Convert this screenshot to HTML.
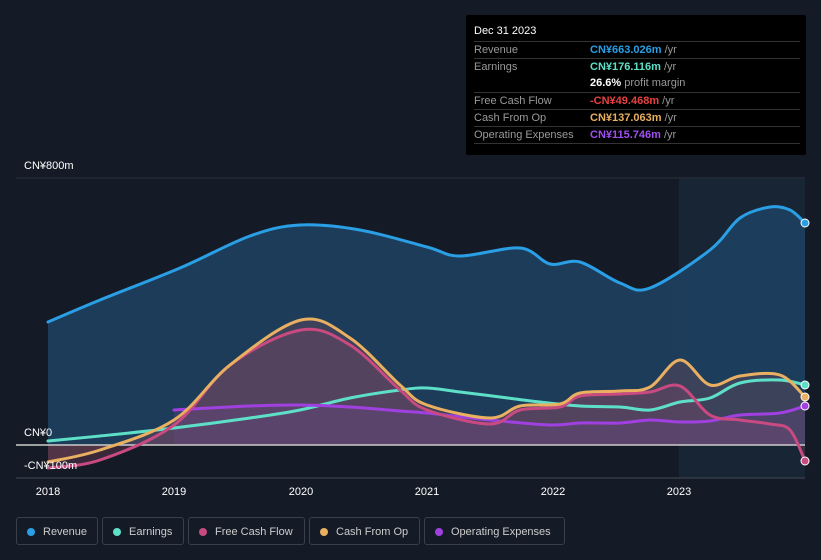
<!DOCTYPE html>
<html><head><meta charset="utf-8"><style>
body{margin:0;width:821px;height:560px;background:#151b26;font-family:"Liberation Sans",sans-serif;overflow:hidden;position:relative}
.tt{position:absolute;left:466px;top:15px;width:340px;height:140px;background:#000;border-radius:2px}
.tt .h{position:absolute;left:8px;top:10px;color:#fff;font-size:11px}
.row{position:absolute;left:8px;width:326px;border-top:1px solid #333;font-size:11px;height:17px;line-height:17px;color:#999}
.row span{position:absolute;left:116px}
.leg{position:absolute;top:517px;height:28px;border:1px solid #3a404a;border-radius:3px;color:#ccc;font-size:11px;line-height:28px;box-sizing:border-box}
.leg i{display:inline-block;width:8px;height:8px;border-radius:50%;margin:0 8px 0 10px;vertical-align:-1px}
.lbl{position:absolute;color:#fff;font-size:11px}
</style></head><body>
<div class="tt">
<div class="h">Dec 31 2023</div>
<div class="row" style="top:26px">Revenue<span style="color:#2a9fe5;font-weight:bold">CN¥663.026m <b style="color:#999;font-weight:normal">/yr</b></span></div>
<div class="row" style="top:43px">Earnings<span style="color:#5ee0c8;font-weight:bold">CN¥176.116m <b style="color:#999;font-weight:normal">/yr</b></span></div>
<div class="row" style="top:60px;border-top:none"><span style="color:#fff;font-weight:bold">26.6% <b style="color:#999;font-weight:normal">profit margin</b></span></div>
<div class="row" style="top:77px">Free Cash Flow<span style="color:#e84040;font-weight:bold">-CN¥49.468m <b style="color:#999;font-weight:normal">/yr</b></span></div>
<div class="row" style="top:94px">Cash From Op<span style="color:#e8b060;font-weight:bold">CN¥137.063m <b style="color:#999;font-weight:normal">/yr</b></span></div>
<div class="row" style="top:111px">Operating Expenses<span style="color:#a050f0;font-weight:bold">CN¥115.746m <b style="color:#999;font-weight:normal">/yr</b></span></div>
<div class="row" style="top:128px;height:1px"></div>
</div>
<div class="lbl" style="left:24px;top:160px">CN¥800m</div>
<svg id="s" width="821" height="560" style="position:absolute;left:0;top:0">
<rect x="679" y="178" width="126" height="300" fill="#1a2a3a" opacity=".7"/>
<line x1="16" y1="178" x2="805" y2="178" stroke="#2a313c"/>
<g id="g"></g>
<line x1="16" y1="445" x2="805" y2="445" stroke="#ccc" stroke-width="1.5"/>
<line x1="16" y1="478" x2="805" y2="478" stroke="#444b55"/>
<g id="l" fill="none" stroke-width="3" stroke-linejoin="round" stroke-linecap="round"></g>
<g stroke="#fff" stroke-width="1"><circle cx="805" cy="223" r="4" fill="#2a9fe5"/><circle cx="805" cy="385" r="4" fill="#5ee0c8"/><circle cx="805" cy="397" r="4" fill="#e8b060"/><circle cx="805" cy="406" r="4" fill="#a040e0"/><circle cx="805" cy="461" r="4" fill="#c84a80"/></g>
<g font-size="11" fill="#fff" font-family="Liberation Sans" text-anchor="middle">
<text x="48" y="495">2018</text><text x="174" y="495">2019</text><text x="301" y="495">2020</text><text x="427" y="495">2021</text><text x="553" y="495">2022</text><text x="679" y="495">2023</text>
</g>
</svg>
<div class="lbl" style="left:24px;top:427px">CN¥0</div>
<div class="lbl" style="left:24px;top:460px">-CN¥100m</div>
<div class="leg" style="left:16px;width:82px"><i style="background:#2a9fe5"></i>Revenue</div>
<div class="leg" style="left:102px;width:82px"><i style="background:#5ee0c8"></i>Earnings</div>
<div class="leg" style="left:188px;width:117px"><i style="background:#c84a80"></i>Free Cash Flow</div>
<div class="leg" style="left:309px;width:111px"><i style="background:#e8b060"></i>Cash From Op</div>
<div class="leg" style="left:424px;width:141px"><i style="background:#a040e0"></i>Operating Expenses</div>
<script>
function P(s){return s.trim().split(/\s+/).map(function(t){return t.split(',').map(Number)})}
function smooth(p){var d='M'+p[0][0]+','+p[0][1];for(var i=0;i<p.length-1;i++){var p0=p[i-1]||p[i],p1=p[i],p2=p[i+1],p3=p[i+2]||p2;var c1x=p1[0]+(p2[0]-p0[0])/6,c1y=p1[1]+(p2[1]-p0[1])/6,c2x=p2[0]-(p3[0]-p1[0])/6,c2y=p2[1]-(p3[1]-p1[1])/6;d+=' C'+c1x+','+c1y+' '+c2x+','+c2y+' '+p2[0]+','+p2[1];}return d}
var NS='http://www.w3.org/2000/svg';
function add(par,d,a){var e=document.createElementNS(NS,'path');e.setAttribute('d',d);for(var k in a)e.setAttribute(k,a[k]);document.getElementById(par).appendChild(e)}
var rev=P('48,322 100,300 180,268 250,236 300,225 360,230 427,247 460,256 520,248 550,264 580,262 620,283 650,288 710,250 740,218 770,207 790,210 805,223');
var ear=P('48,441 100,436 174,428 250,418 300,410 350,398 400,390 427,388 460,392 500,397 540,402 580,406 620,407 650,410 680,402 710,398 740,383 780,380 805,385');
var fcf=P('48,468 100,460 174,425 230,365 301,330 350,345 400,390 427,410 490,424 520,410 560,407 580,396 620,394 650,392 680,386 710,415 740,420 770,424 790,430 805,461');
var cop=P('48,462 100,450 174,420 230,365 301,320 350,338 400,385 427,405 490,418 520,406 560,404 580,393 620,391 650,387 680,360 710,385 740,376 780,375 805,397');
var opx=P('174,410 250,406 301,405 350,407 400,411 427,413 490,420 550,425 580,423 620,423 650,420 680,422 710,421 740,415 780,413 805,406');
add('g',smooth(rev)+' L805,445 L48,445 Z',{fill:'#1e4566',opacity:'.8'});
add('g',smooth(cop)+' L805,445 L48,445 Z',{fill:'#7a4a5a',opacity:'.35'});
add('g',smooth(fcf)+' L805,445 L48,445 Z',{fill:'#8a4a6a',opacity:'.3'});
add('g',smooth(opx)+' L805,445 L174,445 Z',{fill:'#6a4a8a',opacity:'.3'});
add('l',smooth(ear),{stroke:'#5ee0c8'});
add('l',smooth(opx),{stroke:'#a040e0'});
add('l',smooth(fcf),{stroke:'#c84a80'});
add('l',smooth(cop),{stroke:'#e8b060'});
add('l',smooth(rev),{stroke:'#2a9fe5'});
</script>
</body></html>
